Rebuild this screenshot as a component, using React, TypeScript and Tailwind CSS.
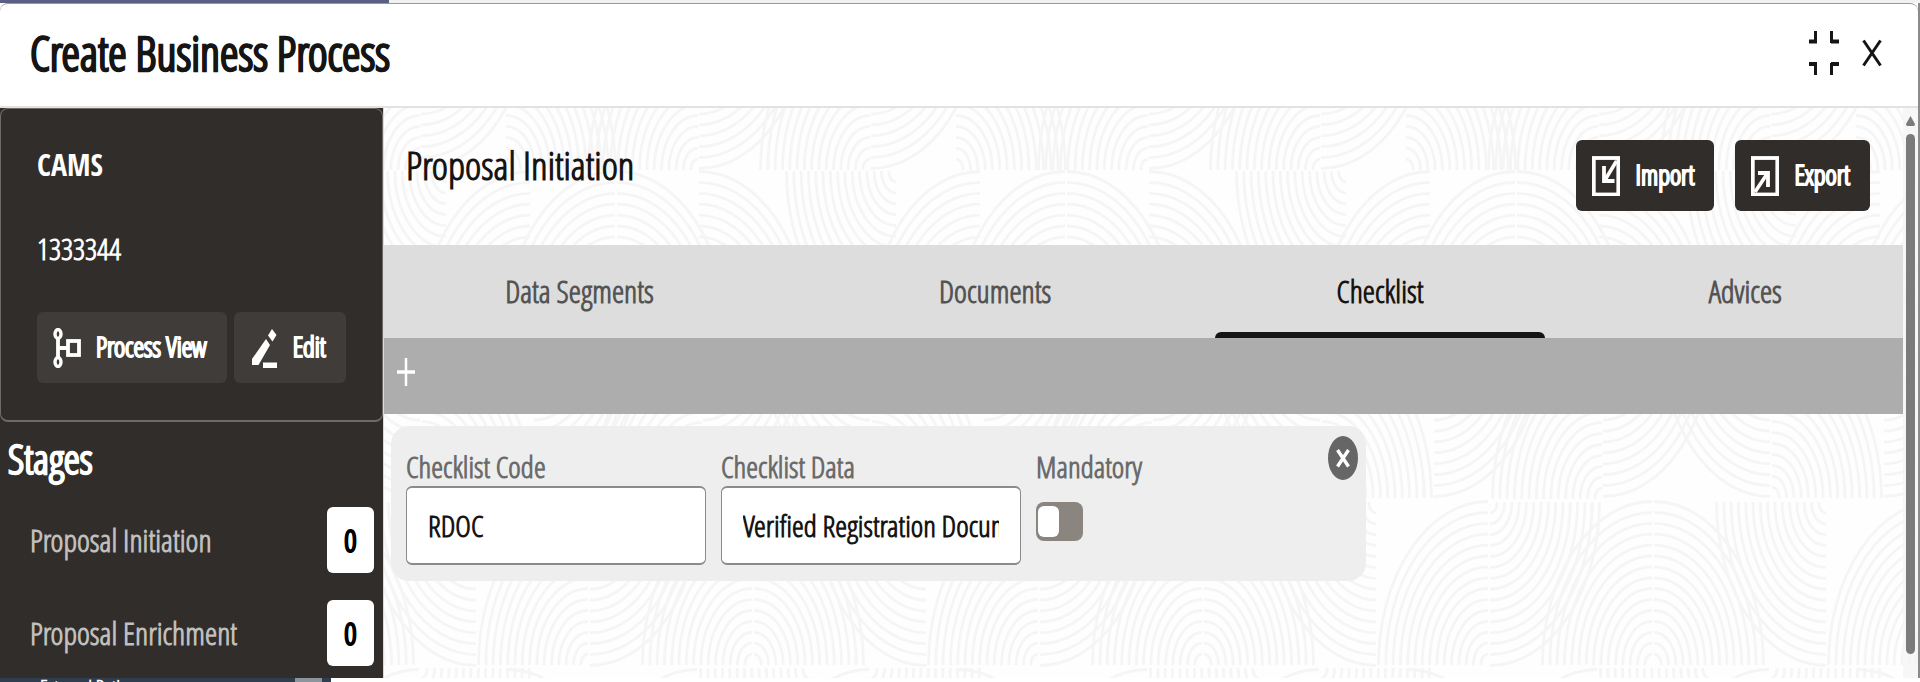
import React, { useState } from "react";

const RING_STEPS = Array.from({ length: 15 }, (_, i) => i + 1);

// cx, cy, horizontal direction, vertical direction
const FANS: [number, number, number, number][] = [
  // top row
  [506, 170, 1, -1],
  [698, 170, -1, -1],
  [699, 5, 1, 1],
  [870, 170, -1, -1],
  [871, 5, 1, 1],
  // second row
  [530, 335, -1, -1],
  [615, 335, -1, -1],
  [617, 335, 1, -1],
  [699, 335, 1, -1],
  [896, 171, -1, 1],
  // third row
  [534, 333, 1, 1],
  [702, 499, -1, -1],
  [703, 333, 1, 1],
  [870, 333, -1, 1],
  [872, 498, 1, -1],
  // fourth row
  [588, 665, -1, -1],
  [590, 502, 1, 1],
  [752, 665, -1, -1],
  [754, 665, 1, -1],
  [926, 502, -1, 1],
  // last row
  [697, 833, -1, -1],
  [810, 668, -1, 1],
  [869, 833, -1, -1],
  [870, 668, 1, 1],
  [958, 833, 1, -1],
];

function fanPath([cx, cy, dx, dy]: [number, number, number, number]) {
  const sweep = dx * dy > 0 ? 1 : 0;
  return RING_STEPS.map((step) => {
    const rx = step * 7.3;
    const ry = step * 10.9;
    return `M${cx + dx * rx} ${cy}A${rx} ${ry} 0 0 ${sweep} ${cx} ${cy + dy * ry}`;
  }).join("");
}

const Waves = () => (
  <svg className="absolute inset-0 h-full w-full" aria-hidden="true">
    <defs>
      <pattern id="waves" x="0" y="-108" width="450" height="690" patternUnits="userSpaceOnUse">
        {[-900, -450, 0].map((shift) => (
          <g key={shift} transform={`translate(${shift - 384} 0)`}>
            {FANS.map((fan, i) => (
              <path key={i} d={fanPath(fan)} fill="none" stroke="#f5f5f5" strokeWidth="2.8" />
            ))}
          </g>
        ))}
      </pattern>
    </defs>
    <rect width="100%" height="100%" fill="url(#waves)" />
  </svg>
);

const ProcessIcon = () => (
  <svg className="h-10 w-7 shrink-0" viewBox="0 0 28 40" fill="none" stroke="currentColor" aria-hidden="true">
    <ellipse cx="5" cy="6" rx="3" ry="4.5" strokeWidth="3.4" />
    <ellipse cx="5" cy="34" rx="3" ry="4.5" strokeWidth="3.4" />
    <path d="M5 10V30M5 20H14" strokeWidth="3.8" />
    <rect x="15" y="13" width="11" height="14" strokeWidth="3.8" />
  </svg>
);

const EditIcon = () => (
  <svg className="h-10 w-7 shrink-0" viewBox="0 0 28 40" fill="currentColor" aria-hidden="true">
    <path d="M22 1L26.500 7L22.500 13.500L18 7.500Z" />
    <path d="M16 11L20 17L8.500 37H2V31Z" />
    <path d="M13 34.500H27V40H13Z" />
  </svg>
);

const ImportIcon = () => (
  <svg className="h-10 w-7 shrink-0" viewBox="0 0 28 40" fill="none" stroke="currentColor" aria-hidden="true">
    <rect x="1.800" y="2" width="24.500" height="36.500" strokeWidth="3.8" />
    <path d="M24.500 5L13 24" strokeWidth="3.6" />
    <path d="M12 10V25H22.500" strokeWidth="3.8" />
  </svg>
);

const ExportIcon = () => (
  <svg className="h-10 w-7 shrink-0" viewBox="0 0 28 40" fill="none" stroke="currentColor" aria-hidden="true">
    <rect x="1.800" y="2" width="24.500" height="36.500" strokeWidth="3.8" />
    <path d="M4 36L16 18" strokeWidth="3.6" />
    <path d="M7 17H17V31" strokeWidth="3.8" />
  </svg>
);

const STAGES = [
  { name: "Proposal Initiation", count: 0 },
  { name: "Proposal Enrichment", count: 0 },
];

const TABS = ["Data Segments", "Documents", "Checklist", "Advices"];

const Sidebar = () => (
  <aside className="w-[384px] shrink-0 border-r border-[#dcdad8] bg-[#312d2a] text-white">
    <section className="rounded-lg border border-b-2 border-[#6f6b68] px-9 pt-[34px] pb-[37px]">
      <h2 className="font-['Open_Sans_Condensed'] text-[30px] leading-[44px]">CAMS</h2>
      <p className="mt-10 text-[30px] leading-[44px]">1333344</p>
      <div className="mt-[41px] flex gap-[7px]">
        <button className="flex h-[71px] items-center gap-[15px] rounded-md bg-[#403c39] pr-5 pl-4 text-[27px] whitespace-nowrap [-webkit-text-stroke:1px]">
          <ProcessIcon />
          Process View
        </button>
        <button className="flex h-[71px] items-center gap-[15px] rounded-md bg-[#403c39] pr-5 pl-4 text-[27px] [-webkit-text-stroke:1px]">
          <EditIcon />
          Edit
        </button>
      </div>
    </section>
    <section>
      <h2 className="px-2 pt-[14px] text-[41px] leading-[44px] [-webkit-text-stroke:1px]">Stages</h2>
      <ul className="mt-[27px] flex flex-col gap-[27px] pr-[9px] pl-[30px]">
        {STAGES.map((stage) => (
          <li key={stage.name} className="flex items-center justify-between text-[31px] text-[#c1bfbd]">
            {stage.name}
            <span className="flex h-[66px] w-[47px] items-center justify-center rounded-md bg-white text-black [-webkit-text-stroke:1px]">
              {stage.count}
            </span>
          </li>
        ))}
      </ul>
    </section>
  </aside>
);

const ChecklistCard = () => {
  const [mandatory, setMandatory] = useState(false);

  return (
    <section className="mt-3 ml-[7px] flex w-[975px] items-start gap-[15px] rounded-[18px] bg-[#eeeeee] pt-[22px] pr-2 pb-4 pl-[15px] text-[30px]">
      <label className="w-[300px] text-[#6b6b6b]">
        <span className="block leading-[38px]">Checklist Code</span>
        <input
          defaultValue="RDOC"
          className="block h-[79px] w-full rounded-md border border-y-2 border-[#8b8b8b] bg-white px-[21px] text-[#161513]"
        />
      </label>
      <label className="w-[300px] text-[#6b6b6b]">
        <span className="block leading-[38px]">Checklist Data</span>
        <input
          defaultValue="Verified Registration Document"
          className="block h-[79px] w-full rounded-md border border-y-2 border-[#8b8b8b] bg-white px-[21px] text-[#161513]"
        />
      </label>
      <label className="text-[#6b6b6b]">
        <span className="block leading-[38px]">Mandatory</span>
        <input
          type="checkbox"
          role="switch"
          checked={mandatory}
          onChange={(e) => setMandatory(e.target.checked)}
          className="peer sr-only"
        />
        <span className="mt-4 flex h-[39px] w-[47px] rounded-lg bg-[#8b8580] px-[2px] py-1 peer-checked:justify-end">
          <span className="w-[21px] rounded-md bg-white" />
        </span>
      </label>
      <button aria-label="Remove" className="-mt-3 ml-auto">
        <svg className="h-11 w-[30px]" viewBox="0 0 30 44" aria-hidden="true">
          <ellipse cx="15" cy="22" rx="15" ry="22" fill="#666666" />
          <path d="M9.500 14L20.500 30.500M20.500 14L9.500 30.500" stroke="#ffffff" strokeWidth="3.4" />
        </svg>
      </button>
    </section>
  );
};

const MainPanel = () => {
  const [activeTab, setActiveTab] = useState("Checklist");

  return (
    <main className="relative flex flex-1 bg-[#fefefe]">
      <Waves />
      <div className="relative flex-1">
        <div className="flex h-[137px] items-start justify-between pr-[33px] pl-[22px]">
          <h2 className="pt-8 text-[39px] leading-[50px] text-[#161513]">Proposal Initiation</h2>
          <div className="flex gap-[21px] pt-8 text-[27px] text-white [-webkit-text-stroke:1px]">
            <button className="flex h-[71px] items-center gap-[15px] rounded-md bg-[#312d2a] pr-5 pl-4">
              <ImportIcon />
              Import
            </button>
            <button className="flex h-[71px] items-center gap-[15px] rounded-md bg-[#312d2a] pr-5 pl-4">
              <ExportIcon />
              Export
            </button>
          </div>
        </div>
        <div role="tablist" className="flex h-[93px] gap-[43px] bg-[#dddddd] text-[31px]">
          {TABS.map((tab) => (
            <button
              key={tab}
              role="tab"
              aria-selected={tab === activeTab}
              onClick={() => setActiveTab(tab)}
              className={
                tab === activeTab
                  ? "flex flex-auto flex-col items-center text-[#161513]"
                  : "flex flex-auto flex-col items-center text-[#545454]"
              }
            >
              <span className="flex flex-1 items-center pt-[6px]">{tab}</span>
              <span
                className={tab === activeTab ? "h-[6px] w-full rounded-t-md bg-[#161513]" : "h-[6px] w-full"}
              />
            </button>
          ))}
        </div>
        <div className="flex h-[76px] items-center bg-[#adadad] pb-2 pl-3 text-white">
          <button aria-label="Add">
            <svg className="h-7 w-5" viewBox="0 0 20 28" stroke="currentColor" aria-hidden="true">
              <path d="M10 0V28" strokeWidth="2.5" />
              <path d="M1 14H19" strokeWidth="3.5" />
            </svg>
          </button>
        </div>
        <ChecklistCard />
      </div>
      <div className="relative flex w-[15px] flex-col items-center bg-[#f5f5f5]/80">
        <svg className="mt-2 h-[10px] w-[9px]" viewBox="0 0 9 10" aria-hidden="true">
          <path d="M4.500 0L9 8Q9 10 7.500 10H1.500Q0 10 0 8Z" fill="#7b7b7b" />
        </svg>
        <div className="mt-2 mb-6 w-[9px] flex-1 rounded-full bg-[#7b7b7b]" />
      </div>
    </main>
  );
};

export default function App() {
  return (
    <div className="flex h-screen flex-col overflow-hidden bg-white font-['Open_Sans_Condensed_Light','Roboto_Condensed',sans-serif] font-bold">
      <div className="flex h-[3px] shrink-0 bg-[#f1f1f1]">
        <div className="w-[389px] bg-[#5b5f85]" />
      </div>
      <div className="flex flex-1 flex-col border-r-2 border-[#8b8b8b]">
        <header className="flex h-[105px] shrink-0 items-center justify-between rounded-t-lg border-t border-b-2 border-t-[#999999] border-b-[#e2e2e2] bg-white pr-9 pb-1 pl-[30px] text-[#161513]">
          <h1 className="text-[47px] leading-[60px] [-webkit-text-stroke:1px]">Create Business Process</h1>
          <div className="flex items-center gap-[23px]">
            <button aria-label="Restore">
              <svg className="h-11 w-[30px]" viewBox="0 0 30 44" fill="none" stroke="currentColor" aria-hidden="true">
                <path d="M0 10.500H8M22 10.500H30M0 33H8M22 33H30" strokeWidth="3.8" />
                <path d="M6.500 0V12M22.500 0V12M6.500 32V44M22.500 32V44" strokeWidth="3" />
              </svg>
            </button>
            <button aria-label="Close">
              <svg className="h-7 w-5" viewBox="0 0 20 28" stroke="currentColor" aria-hidden="true">
                <path d="M1.500 1.500L18.500 26.500M18.500 1.500L1.500 26.500" strokeWidth="3" />
              </svg>
            </button>
          </div>
        </header>
        <div className="flex flex-1">
          <Sidebar />
          <MainPanel />
        </div>
      </div>
      <footer className="flex h-1 shrink-0 overflow-hidden">
        <div className="flex w-[331px] justify-between bg-[#2f3e4e] pr-[9px] pl-10 text-[20px] leading-[20px] text-white">
          External Rating
          <span className="w-[27px] bg-[#8b959d]" />
        </div>
      </footer>
    </div>
  );
}
